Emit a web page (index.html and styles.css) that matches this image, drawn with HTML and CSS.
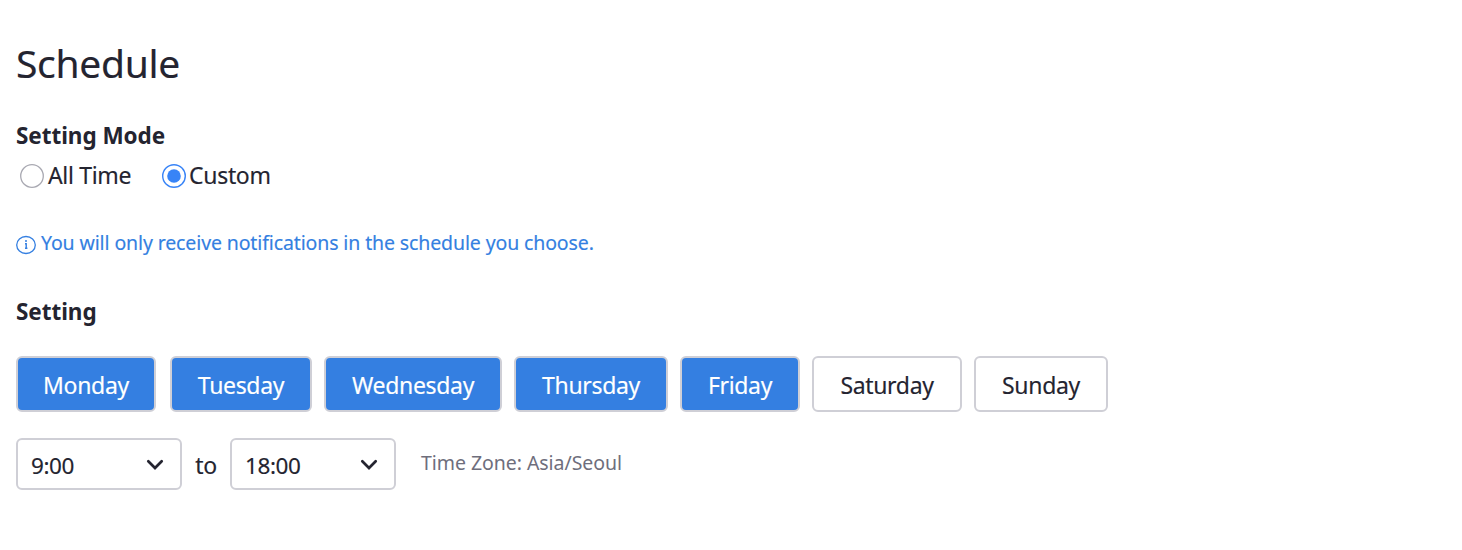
FILE: index.html
```html
<!DOCTYPE html>
<html lang="en">
<head>
<meta charset="utf-8">
<title>Schedule</title>
<link rel="stylesheet" href="styles.css">
</head>
<body>
<main class="page">
  <h1 class="title">Schedule</h1>
  <h2 class="heading">Setting Mode</h2>
  <div class="modes">
    <label class="mode"><svg class="radio" width="24" height="24" viewBox="0 0 24 24" fill="none"><circle cx="12" cy="12" r="11.3" stroke="#a9a9b2" stroke-width="1.3"/></svg><span>All Time</span></label>
    <label class="mode"><svg class="radio" width="24" height="24" viewBox="0 0 24 24" fill="none"><circle cx="12" cy="12" r="11.3" stroke="#3884f7" stroke-width="1.4"/><circle cx="12" cy="12" r="6.8" fill="#3884f7"/></svg><span>Custom</span></label>
  </div>
  <p class="info">
    <svg class="info-icon" width="20" height="20" viewBox="0 0 20 20" fill="none" stroke="currentColor" stroke-width="1.3"><ellipse cx="10" cy="10" rx="9.3" ry="8.5"/><path d="M9 8.700h1.200v4.500M9 13.300h2.400" stroke-width="1.400"/><path d="M9 6h2" stroke-width="1.700"/></svg>
    <span>You will only receive notifications in the schedule you choose.</span>
  </p>
  <h2 class="heading">Setting</h2>
  <div class="days">
    <button class="day mon on">Monday</button>
    <button class="day tue on">Tuesday</button>
    <button class="day wed on">Wednesday</button>
    <button class="day thu on">Thursday</button>
    <button class="day fri on">Friday</button>
    <button class="day sat">Saturday</button>
    <button class="day sun">Sunday</button>
  </div>
  <div class="times">
    <div class="select"><span>9:00</span><svg width="18" height="12" viewBox="0 0 18 12" fill="none" stroke="currentColor" stroke-width="2.7" stroke-linecap="round"><path d="M2.3 2.3L9 9l6.700-6.700"/></svg></div>
    <span class="to">to</span>
    <div class="select"><span>18:00</span><svg width="18" height="12" viewBox="0 0 18 12" fill="none" stroke="currentColor" stroke-width="2.7" stroke-linecap="round"><path d="M2.3 2.3L9 9l6.700-6.700"/></svg></div>
    <span class="zone">Time Zone: Asia/Seoul</span>
  </div>
</main>
</body>
</html>
```
FILE: styles.css
```css
* { box-sizing: border-box; }
body { margin: 0; background: #fff; color: #242430; font: 23px/32px "Noto Sans", sans-serif; letter-spacing: -0.33px; -webkit-text-stroke: 0.15px currentColor; }
.page { padding: 35px 16px 0; }
.title { margin: 0; font-size: 39px; font-weight: 400; line-height: 56px; letter-spacing: -0.3px; }
.heading { margin: 0; font-size: 22.5px; font-weight: 700; line-height: 32px; letter-spacing: -0.05px; -webkit-text-stroke: 0; }
.title + .heading { margin-top: 29px; }
.modes { display: flex; gap: 31px; height: 40px; padding-left: 4px; margin-top: 4px; }
.mode { display: flex; gap: 4px; line-height: 38px; }
.mode + .mode { gap: 3px; }
.radio { margin-top: 8px; }
.info { display: flex; gap: 5px; margin: 31px 0 0; height: 32px; font-size: 19.5px; letter-spacing: -0.12px; color: #347fe1; }
.info-icon { margin-top: 8px; }
.info + .heading { margin-top: 37px; }
.days { display: flex; margin-top: 28px; }
.day { height: 56px; padding: 2px 0 0; border: 2px solid #cfcfd6; border-radius: 6px; background: #fff; color: inherit; font: inherit; letter-spacing: inherit; }
.on { background: #347fe1; color: #fff; }
.mon { width: 140px; margin-right: 14px; }
.tue { width: 142px; margin-right: 12px; }
.wed { width: 178px; margin-right: 12px; }
.thu { width: 154px; margin-right: 12px; }
.fri { width: 120px; margin-right: 12px; }
.sat { width: 150px; margin-right: 12px; }
.sun { width: 134px; }
.times { display: flex; margin-top: 26px; }
.select { display: flex; justify-content: space-between; width: 166px; height: 52px; padding: 10px 16px 0 13px; border: 2px solid #cfcfd6; border-radius: 6px; font-size: 22.5px; letter-spacing: -0.4px; }
.select svg { margin-top: 9px; }
.to { width: 48px; text-align: center; line-height: 54px; }
.zone { margin-left: 25px; font-size: 19.5px; line-height: 50px; letter-spacing: -0.05px; color: #6e6e7c; -webkit-text-stroke: 0; }
```
